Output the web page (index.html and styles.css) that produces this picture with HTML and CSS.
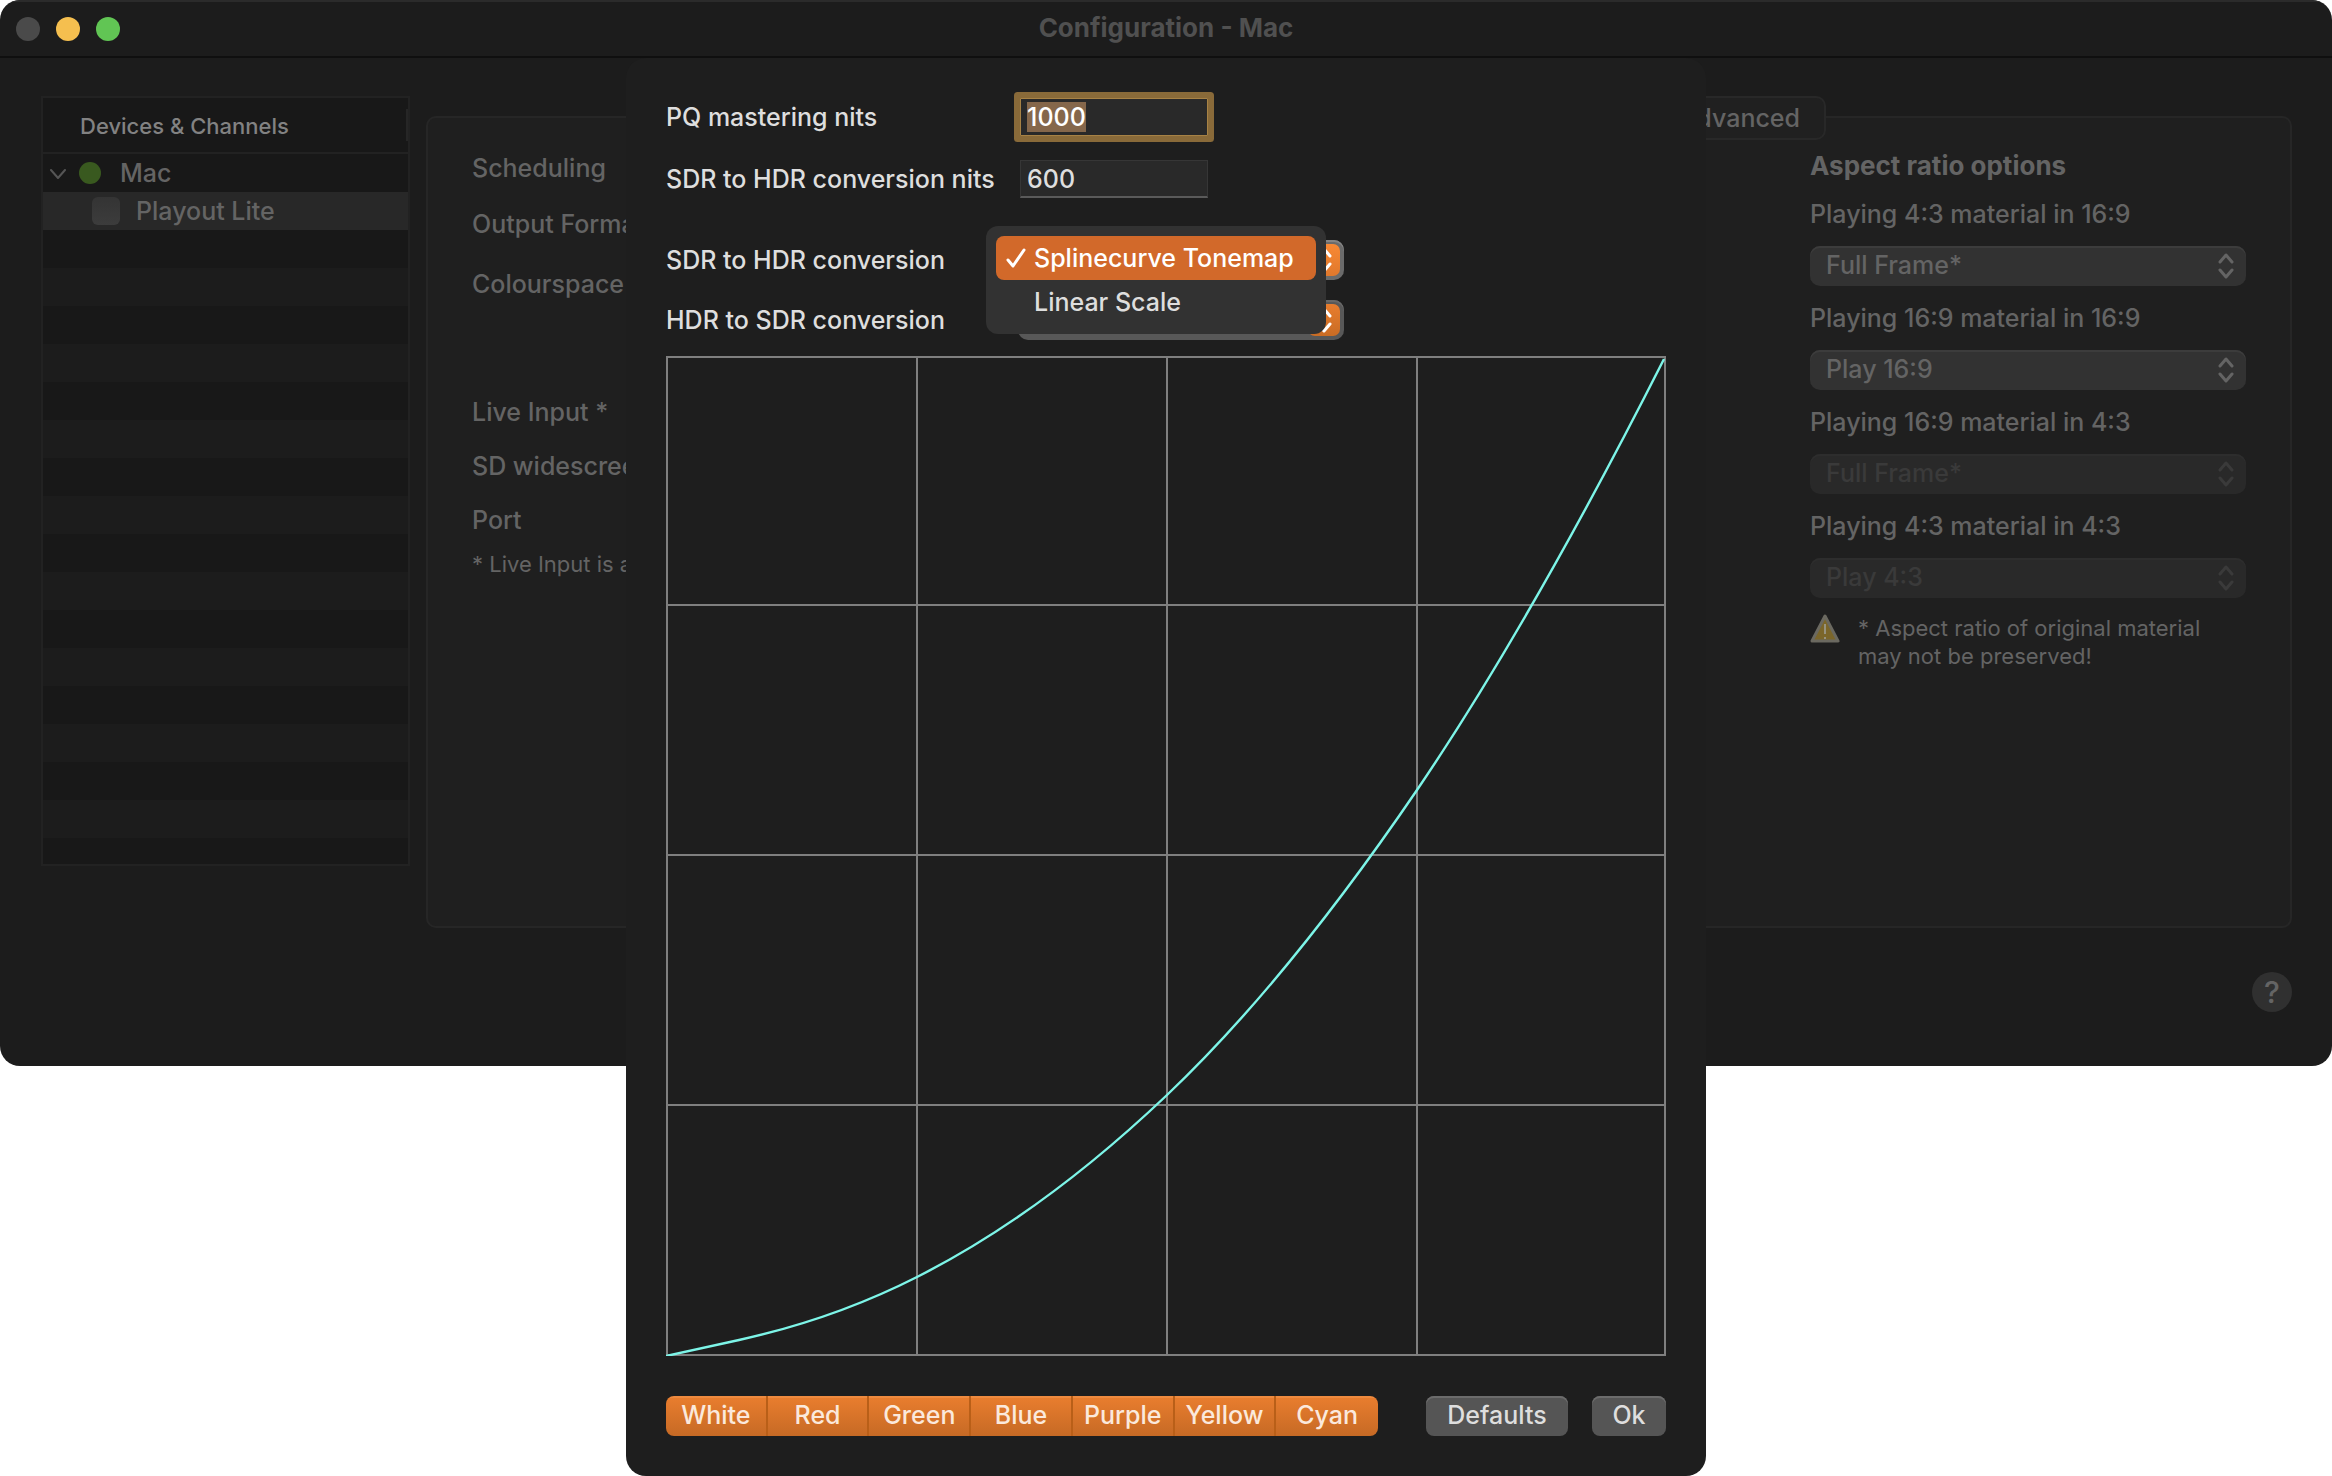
FILE: index.html
```html
<!DOCTYPE html>
<html lang="en">
<head>
<meta charset="utf-8">
<title>Configuration - Mac</title>
<link rel="stylesheet" href="styles.css">
</head>
<body>
<svg class="defs" aria-hidden="true">
  <symbol id="updown" viewBox="0 0 16 28"><path d="M2 10 8 3l6 7M2 18l6 7 6-7" fill="none" stroke="currentColor" stroke-width="3" stroke-linecap="round" stroke-linejoin="round"/></symbol>
</svg>
<div class="stage">
  <main class="window">
    <header class="titlebar">
      <div class="lights"><button class="light" aria-label="Close"></button><button class="light light-min" aria-label="Minimise"></button><button class="light light-max" aria-label="Zoom"></button></div>
      <h1 class="title">Configuration - Mac</h1>
    </header>
    <div class="content">
      <aside class="sidebar">
        <div class="side-head"><span>Devices &amp; Channels</span></div>
        <div class="side-body">
          <div class="row">
            <svg class="chev" viewBox="0 0 16 10"><path d="M1 1l7 8 7-8" fill="none" stroke="currentColor" stroke-width="2" stroke-linecap="round" stroke-linejoin="round"/></svg>
            <span class="dot"></span><span>Mac</span>
          </div>
          <label class="row row-on"><input class="tick" type="checkbox"><span>Playout Lite</span></label>
        </div>
      </aside>
      <section class="group">
        <button class="tab">Advanced</button>
        <div class="labels">
          <span>Scheduling</span><span class="format">Output Format</span><span class="colour">Colourspace</span>
          <span>Live Input *</span><span>SD widescreen</span><span>Port</span>
          <small>* Live Input is available</small>
        </div>
        <div class="aspect">
          <h2>Aspect ratio options</h2>
          <label for="a1">Playing 4:3 material in 16:9</label>
          <div class="pop"><select id="a1"><option>Full Frame*</option></select><svg class="ud"><use href="#updown"/></svg></div>
          <label for="a2">Playing 16:9 material in 16:9</label>
          <div class="pop"><select id="a2"><option>Play 16:9</option></select><svg class="ud"><use href="#updown"/></svg></div>
          <label for="a3">Playing 16:9 material in 4:3</label>
          <div class="pop off"><select id="a3" disabled><option>Full Frame*</option></select><svg class="ud"><use href="#updown"/></svg></div>
          <label for="a4">Playing 4:3 material in 4:3</label>
          <div class="pop off"><select id="a4" disabled><option>Play 4:3</option></select><svg class="ud"><use href="#updown"/></svg></div>
          <div class="note">
            <svg class="warn" viewBox="0 0 30 30"><path d="M15 2 28 27H2z" fill="#7b662a" stroke="#6b6960" stroke-width="3" stroke-linejoin="round"/><path d="M15 10v10M15 23v2" stroke="#96927f" stroke-width="2"/></svg>
            <p>* Aspect ratio of original material<br>may not be preserved!</p>
          </div>
        </div>
      </section>
    </div>
    <footer class="foot"><button class="help" aria-label="Help">?</button></footer>
  </main>

  <section class="sheet" role="dialog" aria-label="HDR conversion">
    <div class="form">
      <div class="fields">
        <label for="pq">PQ mastering nits</label><input id="pq" class="field focused" value="1000">
        <label for="sdr">SDR to HDR conversion nits</label><input id="sdr" class="field" value="600">
      </div>
      <div class="choices">
        <label for="s2h">SDR to HDR conversion</label>
        <div class="choice open"><select id="s2h"><option>Splinecurve Tonemap</option><option>Linear Scale</option></select><span class="knob"><svg class="ud"><use href="#updown"/></svg></span>
          <ul class="menu" role="listbox">
            <li class="picked" role="option" aria-selected="true"><svg class="check" viewBox="0 0 20 22"><path d="M2 13l5 6L18 3" fill="none" stroke="currentColor" stroke-width="3" stroke-linecap="round" stroke-linejoin="round"/></svg>Splinecurve Tonemap</li>
            <li role="option">Linear Scale</li>
          </ul>
        </div>
        <label for="h2s">HDR to SDR conversion</label>
        <div class="choice"><select id="h2s"><option>Linear Scale</option></select><span class="knob"><svg class="ud"><use href="#updown"/></svg></span></div>
      </div>
    </div>
    <svg class="chart" viewBox="0 0 1000 1000">
      <path d="M1 1H999V999H1zM251 1V999M501 1V999M751 1V999M1 249H999M1 499H999M1 749H999" fill="none" stroke="#7f7f7f" stroke-width="2"/>
      <path d="M0 1000 73 984C132 971 192 951 251 921C334 879 418 818 501 739C584 660 668 556 751 434C833 313 916 165 998 3" fill="none" stroke="#7df5e8" stroke-width="2.4"/>
    </svg>
    <div class="actions">
      <div class="segments"><button>White</button><button>Red</button><button>Green</button><button>Blue</button><button>Purple</button><button>Yellow</button><button>Cyan</button></div>
      <button class="push defaults">Defaults</button>
      <button class="push">Ok</button>
    </div>
  </section>
</div>
<script src="focus.js"></script>
</body>
</html>
```
FILE: focus.js
```js
const first = document.getElementById("pq");
first.focus();
first.select();
```
FILE: styles.css
```css
* { box-sizing: border-box; }
body { margin: 0; background: #fff; font-family: Inter, "Liberation Sans", sans-serif; font-size: 25px; font-weight: 500; line-height: 32px; color: #646464; }
button, input, select { font: inherit; color: inherit; border: 0; margin: 0; padding: 0; background: none; }
h1, h2, p, ul { margin: 0; padding: 0; font-size: inherit; }
.defs { position: absolute; width: 0; height: 0; }

/* the sheet hangs over the window, both share one grid cell */
.stage { display: grid; align-items: start; }
.window, .sheet { grid-area: 1 / 1; }

.window { background: #1c1c1c; border-radius: 20px; overflow: hidden; }
.titlebar { display: grid; grid-template-columns: 1fr auto 1fr; align-items: center; height: 58px; padding: 0 16px; border-top: 2px solid #2b2b2b; border-bottom: 2px solid #0f0f0f; }
.lights { display: flex; gap: 16px; }
.light { width: 24px; height: 24px; border-radius: 50%; background: #4a4a4a; }
.light-min { background: #f5bf4f; }
.light-max { background: #61c554; }
.title { padding-bottom: 2px; font-size: 26px; font-weight: 700; color: #505050; }

.content { display: flex; gap: 16px; padding: 38px 40px 0 41px; align-items: flex-start; }
.sidebar { flex: 0 0 369px; border: 2px solid #222; background: #181818; }
.side-head { display: flex; align-items: center; height: 56px; padding: 2px 0 0 37px; border-bottom: 2px solid #222; font-size: 22px; color: #828282; background: linear-gradient(#262626, #262626) right 50% / 2px 32px no-repeat; }
.side-body { height: 710px; background: repeating-linear-gradient(#181818 0 38px, #1c1c1c 38px 76px); }
.row { display: flex; align-items: center; height: 38px; padding-left: 7px; }
.row-on { background: #282828; padding-left: 49px; }
.chev { width: 16px; height: 10px; margin-top: 2px; color: #555; }
.dot { width: 22px; height: 22px; border-radius: 50%; background: #39591f; margin: 0 19px 0 13px; }
.tick { appearance: none; width: 28px; height: 28px; border-radius: 6px; background: linear-gradient(#343434, #3c3c3c); margin-right: 16px; }

.group { position: relative; flex: 1; display: flex; justify-content: space-between; height: 812px; margin-top: 20px; padding: 34px 44px 0; border: 2px solid #262626; border-radius: 10px; background: #1f1f1f; }
.tab { position: absolute; top: -22px; right: 464px; height: 44px; padding: 0 24px; border: 2px solid #282828; border-radius: 10px; background: #202020; line-height: 38px; }
.labels { display: flex; flex-direction: column; white-space: nowrap; }
.labels span { margin-bottom: 22px; }
.labels .format { margin: 2px 0 28px; }
.labels .colour { margin-bottom: 96px; }
.labels small { font-size: 22px; font-weight: 400; margin-top: -10px; }
.aspect { display: flex; flex-direction: column; width: 436px; margin-top: -2px; }
.aspect h2 { font-size: 26px; font-weight: 700; margin-bottom: 16px; }
.aspect label { margin-bottom: 16px; }
.pop { display: grid; align-items: center; height: 40px; margin-bottom: 16px; border-radius: 10px; box-shadow: inset 0 2px #3c3c3c; background: #323232; }
.pop select { grid-area: 1 / 1; appearance: none; width: 100%; height: 40px; padding: 0 0 2px 16px; opacity: 1; }
.ud { grid-area: 1 / 1; justify-self: end; width: 16px; height: 28px; margin-right: 12px; pointer-events: none; }
.off { background: #292929; box-shadow: inset 0 2px #2d2d2d; color: #3a3a3a; }
.note { display: flex; gap: 18px; font-size: 22px; font-weight: 400; line-height: 28px; }
.warn { width: 30px; height: 30px; }
.foot { display: flex; justify-content: flex-end; padding: 44px 40px 54px; }
.help { width: 40px; height: 40px; border-radius: 50%; background: #303030; font-size: 30px; line-height: 40px; }

.sheet { position: relative; justify-self: center; width: 1080px; margin-top: 58px; padding: 40px; border-radius: 20px; background: #1e1e1e; color: #dedede; }
.form { display: grid; gap: 42px; padding-bottom: 16px; }
.fields, .choices { display: grid; align-items: center; }
.fields { grid-template-columns: 354px 188px; row-gap: 24px; }
.choices { grid-template-columns: 352px 326px; row-gap: 20px; }
.field { width: 188px; height: 38px; padding: 0 6px; background: #292929; border: 1px solid #363636; border-bottom: 2px solid #5a5a5a; outline: 0; }
.focused { border: 1px solid #a78245; box-shadow: 0 0 0 6px #896a39; border-radius: 1px; }
.field::selection { background: #85674b; color: #fff; }
.choice { position: relative; display: grid; align-items: center; height: 40px; border-radius: 10px; background: #585858; box-shadow: inset 0 2px #686868; }
.open { background: #6b6b6b; box-shadow: inset 0 2px #858585; }
.choice select { grid-area: 1 / 1; appearance: none; width: 100%; padding-left: 16px; color: transparent; }
.knob { grid-area: 1 / 1; justify-self: end; display: grid; place-items: center; width: 32px; height: 32px; margin-right: 4px; border-radius: 7px; background: linear-gradient(#e87d2e, #c96c24); color: #fff; }
.open .knob { background: linear-gradient(#f98934, #e0782c); }
.knob .ud { margin: 0; justify-self: center; }
.menu { position: absolute; z-index: 2; top: -14px; left: -32px; width: 340px; padding: 10px; border-radius: 12px; background: #323232; list-style: none; }
.menu li { display: flex; align-items: center; height: 44px; padding-left: 38px; border-radius: 8px; }
.menu .picked { background: #d2692a; color: #fff; padding-left: 10px; }
.check { width: 20px; height: 22px; margin-right: 8px; }
.chart { display: block; width: 100%; }
.actions { display: flex; gap: 24px; padding-top: 40px; }
.segments { flex: 1; display: grid; grid-template-columns: repeat(7, 1fr); margin-right: 24px; border-radius: 8px; overflow: hidden; background: linear-gradient(#ee8a3f 0 2px, #e87d2e 2px, #c66a25); }
.segments button { height: 40px; padding-bottom: 2px; border-right: 2px solid #b95f18; color: #fbe9dc; }
.segments button:last-child { border: 0; }
.push { width: 74px; height: 40px; padding-bottom: 2px; border-radius: 8px; background: #555; box-shadow: inset 0 2px #6c6c6c; }
.defaults { width: 142px; }
```
